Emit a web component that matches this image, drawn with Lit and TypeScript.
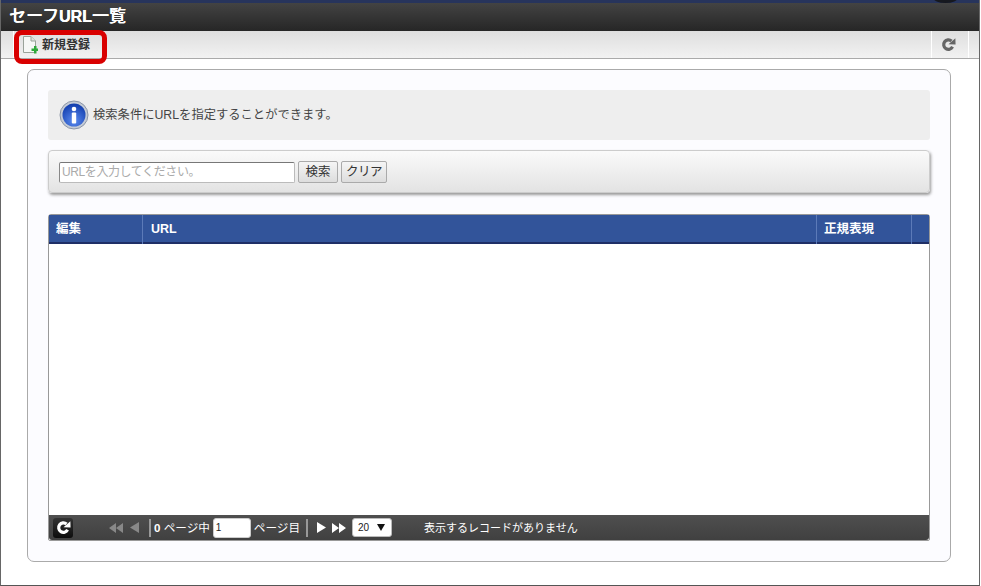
import { LitElement, html, css } from "lit";
import { customElement } from "lit/decorators.js";

const refresh = (c: string, s: number) => html`<svg width=${s} height=${s} viewBox="0 0 14 14"><path d="M10.800 9.200A4.400 4.400 0 1 1 9.800 3.800" fill="none" stroke=${c} stroke-width="3"/><path d="M7 6.800L13.600 7L13.400 1.200Z" fill=${c}/></svg>`;

@customElement("app-root")
export class AppRoot extends LitElement {
  static styles = css`
    :host { display: block; width: 980px; height: 586px; box-sizing: border-box; font-family: "Liberation Sans", "Noto Sans CJK JP", sans-serif; font-size: 12px; color: #333; background: #fff; border-right: 1px solid #666; border-left: 1px solid #666; border-bottom: 1px solid #555; position: relative; overflow: hidden; }
    .title { height: 28px; margin-top: 3px; background: linear-gradient(#434343, #262626); color: #fff; font-size: 17px; font-weight: 500; line-height: 28px; padding-left: 8px; box-shadow: 0 -3px 0 #27345c; text-shadow: 0.3px 0 0 #fff; }
    .title b { font-weight: 700; font-size: 16px; }
    .bump { position: absolute; left: 932px; top: -8px; width: 25px; height: 11px; border-radius: 50%; background: #16181f; }
    .toolbar { height: 27px; background: linear-gradient(#dedede, #f2f2f2); border-bottom: 1px solid #aaa; display: flex; justify-content: space-between; }
    .tool { margin-left: 12px; width: 90px; display: flex; align-items: center; gap: 4px; padding-left: 9px; box-sizing: border-box; font-size: 12px; font-weight: 700; border-left: 1px solid #fff; }
    .tool span { margin-bottom: 2px; }
    .reload { display: flex; margin-right: 10px; width: 38px; height: 27px; box-sizing: border-box; align-items: center; justify-content: center; padding-right: 3px; border-left: 1px solid #fff; border-right: 1px solid #fff; }
    .highlight { position: absolute; left: 13px; top: 30px; width: 93px; height: 34px; box-sizing: border-box; border: 5px solid #d90000; border-radius: 8px; }
    .card { margin: 10px 28px 0 26px; height: 493px; box-sizing: border-box; background: #fcfcff; border: 1px solid #aaa; border-radius: 7px; padding: 20px 20px 0; }
    .info { height: 50px; border-radius: 3px; background: #eee; display: flex; align-items: center; gap: 4px; padding-left: 11px; font-size: 12.3px; color: #444; }
    .info span { margin-bottom: 3px; }
    .search { margin-top: 10px; height: 43px; box-sizing: border-box; border-radius: 4px; border: 1px solid #ccc; background: linear-gradient(#fafafa, #e3e3e3); box-shadow: 1px 2px 3px #999; display: flex; align-items: center; padding: 1px 0 0 10px; gap: 3px; }
    .input { width: 236px; height: 21px; box-sizing: border-box; border: 1px solid #bbb; border-top-color: #777; border-left-color: #888; border-radius: 2px; background: #fff; color: #aaa; font-size: 12px; letter-spacing: -0.4px; line-height: 19px; padding-left: 2px; }
    .btn { height: 22px; box-sizing: border-box; border: 1px solid #aaa; border-radius: 2px; background: linear-gradient(#f5f5f5, #ddd); color: #333; font-size: 12.5px; line-height: 20px; text-align: center; }
    .w40 { width: 40px; }
    .w46 { width: 46px; letter-spacing: -0.5px; }
    .table { margin-top: 21px; height: 327px; box-sizing: border-box; border: 1px solid #999; border-radius: 3px 3px 2px 2px; background: #fff; display: flex; flex-direction: column; }
    .head { height: 27px; flex: none; display: grid; grid-template-columns: 94px 674px 95px 1fr; background: #32549a; border-bottom: 2px solid #1f2f66; color: #fff; font-weight: 700; font-size: 12.5px; line-height: 29px; }
    .head div { padding-left: 7px; border-right: 1px solid #5c7ab8; }
    .head div:nth-child(2) { padding-left: 8px; }
    .head div:last-child { border: none; }
    .rows { flex: 1; }
    .pager { height: 25px; flex: none; background: linear-gradient(#4f4f4f, #404040); border-radius: 0 0 3px 3px; color: #fff; display: flex; align-items: center; font-size: 11.6px; }
    .pager > span { margin-bottom: 2px; }
    .rbtn { margin-left: 4px; width: 20px; height: 20px; border-radius: 3px; background: linear-gradient(#333, #0d0d0d); display: flex; align-items: center; justify-content: center; }
    .arrows { display: flex; margin-left: 36px; align-items: center; gap: 7px; }
    .sep { width: 2px; height: 18px; background: #999; margin: 0 3px 0 10px; }
    .sep2 { margin-left: 6px; }
    .pageinput { width: 38px; height: 20px; box-sizing: border-box; margin: 0 3px; background: #fff; border: 1px solid #ccc; border-radius: 3px; color: #222; font-size: 10px; line-height: 18px; padding-left: 2px; }
    .select { margin-left: 6px; width: 40px; height: 19px; box-sizing: border-box; background: #fff; border: 1px solid #bbb; border-radius: 3px; color: #222; font-size: 10px; line-height: 18px; padding-left: 5px; display: flex; gap: 8px; align-items: center; }
    .pager > .msg { margin-left: 32px; font-size: 11px; }
    .play { margin-left: 6px; }
    .ff { margin-left: 6px; }
    svg { display: block; flex: none; }
  `;

  render() {
    return html`
      <div class="title">セーフ<b>URL</b>一覧</div>
      <div class="bump"></div>
      <div class="toolbar">
        <div class="tool">
          <svg width="15" height="18" viewBox="0 0 15 18"><path d="M.5.5H8L12.5 5V16.5H.5Z" fill="#f6f8f6" stroke="#9aa39a"/><path d="M8 .5V5H12.5" fill="#dde3dd" stroke="#9aa39a"/><path d="M8.500 12.500h2.500V10h2.500v2.500H15.500v2.500H13.500v2.500H11v-2.500H8.500Z" fill="#2fa83a"/></svg>
          <span>新規登録</span>
        </div>
        <div class="reload">${refresh("#666", 15)}</div>
      </div>
      <div class="highlight"></div>
      <div class="card">
        <div class="info">
          <svg width="30" height="30" viewBox="0 0 30 30"><defs><radialGradient id="g" cx=".5" cy=".75" r=".7"><stop offset="0" stop-color="#5c8cf0"/><stop offset="1" stop-color="#1440b0"/></radialGradient></defs><circle cx="15" cy="15" r="14" fill="#c4cbd6" stroke="#8d97a8"/><circle cx="15" cy="15" r="11.500" fill="url(#g)"/><circle cx="15" cy="9" r="2.300" fill="#fff"/><rect x="12.800" y="12.500" width="4.400" height="11" rx="1" fill="#fff"/></svg>
          <span>検索条件にURLを指定することができます。</span>
        </div>
        <div class="search">
          <div class="input">URLを入力してください。</div>
          <div class="btn w40">検索</div>
          <div class="btn w46">クリア</div>
        </div>
        <div class="table">
          <div class="head"><div>編集</div><div>URL</div><div>正規表現</div><div></div></div>
          <div class="rows"></div>
          <div class="pager">
            <div class="rbtn">${refresh("#fff", 15)}</div>
            <div class="arrows">
              <svg width="14" height="10" viewBox="0 0 14 10"><path d="M7 0V10L0 5ZM14 0V10L7 5Z" fill="#888"/></svg>
              <svg width="9" height="11" viewBox="0 0 9 11"><path d="M9 0V11L0 5.500Z" fill="#888"/></svg>
            </div>
            <div class="sep"></div>
            <span><b>0</b>&nbsp;ページ中</span>
            <div class="pageinput">1</div>
            <span>ページ目</span>
            <div class="sep sep2"></div>
            <svg class="play" width="9" height="11" viewBox="0 0 9 11"><path d="M0 0V11L9 5.500Z" fill="#fff"/></svg>
            <svg class="ff" width="14" height="10" viewBox="0 0 14 10"><path d="M0 0V10L7 5ZM7 0V10L14 5Z" fill="#fff"/></svg>
            <div class="select"><span>20</span><svg width="8" height="7" viewBox="0 0 8 7"><path d="M0 0H8L4 7Z" fill="#111"/></svg></div>
            <span class="msg">表示するレコードがありません</span>
          </div>
        </div>
      </div>
    `;
  }
}
